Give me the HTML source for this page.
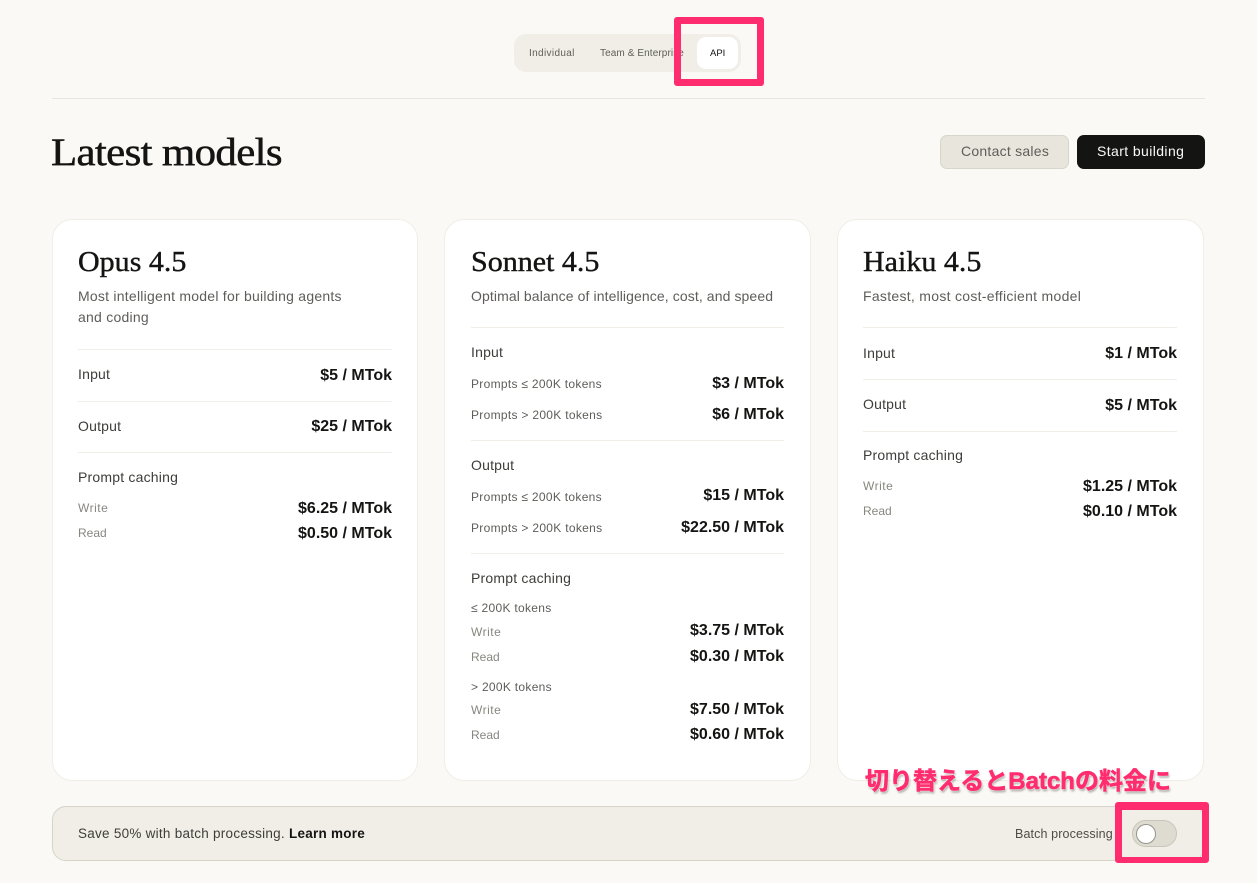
<!DOCTYPE html>
<html lang="en">
<head>
<meta charset="utf-8">
<title>Latest models</title>
<style>
html,body{margin:0;padding:0;background:#faf9f5;}
body{width:1257px;height:883px;position:relative;overflow:hidden;font-family:"Liberation Sans","Noto Sans CJK JP",sans-serif;color:#141413;}
.t{position:absolute;white-space:nowrap;line-height:20px;height:20px;}
.r{text-align:right;}
.box{position:absolute;box-sizing:border-box;}
.card{position:absolute;box-sizing:border-box;top:219px;height:562px;background:#fff;border:1px solid #f0eee6;border-radius:20px;}
.ln{position:absolute;height:1px;background:#f0eee6;}
.name{font-family:"Liberation Serif",serif;font-size:29px;font-weight:400;color:#141413;-webkit-text-stroke:.4px #141413;transform:scaleX(1.035);transform-origin:left center;}
.desc{font-size:14px;color:#5e5d59;}
.h{font-size:14px;color:#3d3d3a;letter-spacing:.2px;}
.s{font-size:12px;color:#5e5d59;letter-spacing:.3px;}
.g{font-size:12px;color:#87867f;}
.w{letter-spacing:.5px;}
.p{font-size:16px;font-weight:700;color:#141413;letter-spacing:0;margin-top:1px;}
.tab{font-size:10px;color:#5e5d59;}
</style>
</head>
<body>
<div class="box" style="left:514px;top:34px;width:227px;height:38px;background:#f0eee6;border-radius:12px;"></div>
<div class="t tab" style="left:529px;top:44px;letter-spacing:.35px;">Individual</div>
<div class="t tab" style="left:600px;top:44px;letter-spacing:.1px;">Team &amp; Enterprise</div>
<div class="box" style="left:697px;top:37px;width:41px;height:32px;background:#fff;border-radius:9px;"></div>
<div class="t" style="left:710px;top:44px;font-size:9.5px;color:#141413;">API</div>
<div class="box" style="left:674px;top:17px;width:90px;height:69px;border:7px solid #ff2d6f;border-radius:3px;"></div>
<div class="ln" style="left:52px;top:98px;width:1153px;background:#e8e6dc;"></div>

<div class="t" style="left:51px;top:133px;height:40px;line-height:40px;font-family:'Liberation Serif',serif;font-size:39px;color:#141413;-webkit-text-stroke:.5px #141413;letter-spacing:-.6px;transform:scaleX(1.1);transform-origin:left center;">Latest models</div>
<div class="box" style="left:940px;top:135px;width:129px;height:34px;background:#e8e6dc;border:1px solid #d8d6cb;border-radius:7px;"></div>
<div class="t" style="left:961px;top:141px;font-size:14px;color:#5e5d59;letter-spacing:.25px;">Contact sales</div>
<div class="box" style="left:1077px;top:135px;width:128px;height:34px;background:#141413;border-radius:7px;"></div>
<div class="t" style="left:1097px;top:141px;font-size:14px;color:#faf9f5;letter-spacing:.4px;">Start building</div>

<div class="card" style="left:52px;width:366px;"></div>
<div class="t name" style="left:78px;top:252px;">Opus 4.5</div>
<div class="t desc" style="left:78px;top:286px;letter-spacing:.24px;">Most intelligent model for building agents</div>
<div class="t desc" style="left:78px;top:307px;letter-spacing:.24px;">and coding</div>
<div class="ln" style="left:78px;top:349px;width:314px;"></div>
<div class="t h" style="left:78px;top:364px;">Input</div>
<div class="t p r" style="right:865px;top:365px;">$5 / MTok</div>
<div class="ln" style="left:78px;top:401px;width:314px;"></div>
<div class="t h" style="left:78px;top:416px;">Output</div>
<div class="t p r" style="right:865px;top:416px;">$25 / MTok</div>
<div class="ln" style="left:78px;top:452px;width:314px;"></div>
<div class="t h" style="left:78px;top:467px;">Prompt caching</div>
<div class="t g w" style="left:78px;top:498px;">Write</div>
<div class="t p r" style="right:865px;top:498px;">$6.25 / MTok</div>
<div class="t g" style="left:78px;top:523px;">Read</div>
<div class="t p r" style="right:865px;top:523px;">$0.50 / MTok</div>

<div class="card" style="left:444px;width:367px;"></div>
<div class="t name" style="left:471px;top:252px;">Sonnet 4.5</div>
<div class="t desc" style="left:471px;top:286px;letter-spacing:.1px;">Optimal balance of intelligence, cost, and speed</div>
<div class="ln" style="left:471px;top:327px;width:313px;"></div>
<div class="t h" style="left:471px;top:342px;">Input</div>
<div class="t s" style="left:471px;top:374px;">Prompts ≤ 200K tokens</div>
<div class="t p r" style="right:473px;top:373px;">$3 / MTok</div>
<div class="t s" style="left:471px;top:405px;">Prompts &gt; 200K tokens</div>
<div class="t p r" style="right:473px;top:404px;">$6 / MTok</div>
<div class="ln" style="left:471px;top:440px;width:313px;"></div>
<div class="t h" style="left:471px;top:455px;">Output</div>
<div class="t s" style="left:471px;top:487px;">Prompts ≤ 200K tokens</div>
<div class="t p r" style="right:473px;top:485px;">$15 / MTok</div>
<div class="t s" style="left:471px;top:518px;">Prompts &gt; 200K tokens</div>
<div class="t p r" style="right:473px;top:517px;">$22.50 / MTok</div>
<div class="ln" style="left:471px;top:553px;width:313px;"></div>
<div class="t h" style="left:471px;top:568px;">Prompt caching</div>
<div class="t s" style="left:471px;top:598px;">≤ 200K tokens</div>
<div class="t g w" style="left:471px;top:622px;">Write</div>
<div class="t p r" style="right:473px;top:620px;">$3.75 / MTok</div>
<div class="t g" style="left:471px;top:647px;">Read</div>
<div class="t p r" style="right:473px;top:646px;">$0.30 / MTok</div>
<div class="t s" style="left:471px;top:677px;">&gt; 200K tokens</div>
<div class="t g w" style="left:471px;top:700px;">Write</div>
<div class="t p r" style="right:473px;top:699px;">$7.50 / MTok</div>
<div class="t g" style="left:471px;top:725px;">Read</div>
<div class="t p r" style="right:473px;top:724px;">$0.60 / MTok</div>

<div class="card" style="left:837px;width:367px;"></div>
<div class="t name" style="left:863px;top:252px;">Haiku 4.5</div>
<div class="t desc" style="left:863px;top:286px;letter-spacing:.29px;">Fastest, most cost-efficient model</div>
<div class="ln" style="left:863px;top:327px;width:314px;"></div>
<div class="t h" style="left:863px;top:343px;">Input</div>
<div class="t p r" style="right:80px;top:343px;">$1 / MTok</div>
<div class="ln" style="left:863px;top:379px;width:314px;"></div>
<div class="t h" style="left:863px;top:394px;">Output</div>
<div class="t p r" style="right:80px;top:395px;">$5 / MTok</div>
<div class="ln" style="left:863px;top:431px;width:314px;"></div>
<div class="t h" style="left:863px;top:445px;">Prompt caching</div>
<div class="t g w" style="left:863px;top:476px;">Write</div>
<div class="t p r" style="right:80px;top:476px;">$1.25 / MTok</div>
<div class="t g" style="left:863px;top:501px;">Read</div>
<div class="t p r" style="right:80px;top:501px;">$0.10 / MTok</div>

<div class="box" style="left:52px;top:806px;width:1153px;height:55px;background:#f0eee6;border:1px solid #d6d4c9;border-radius:14px;"></div>
<div class="t" style="left:78px;top:824px;font-size:13.5px;color:#3d3d3a;letter-spacing:.26px;">Save 50% with batch processing. <b style="color:#141413;">Learn more</b></div>
<div class="t" style="left:1015px;top:824px;font-size:12.5px;color:#4d4c48;letter-spacing:.12px;">Batch processing</div>
<div class="box" style="left:1132px;top:820px;width:45px;height:27px;background:#dedcd1;border:1px solid #c8c6ba;border-radius:14px;"></div>
<div class="box" style="left:1137px;top:825px;width:18px;height:18px;background:#fff;border-radius:50%;box-shadow:0 0 0 1px rgba(90,90,80,.55);"></div>
<div class="box" style="left:1115px;top:802px;width:94px;height:61px;border-style:solid;border-color:#ff2d6f;border-width:8px 7px 6px 7px;border-radius:3px;"></div>
<div class="t" style="left:865px;top:769px;height:26px;line-height:26px;font-size:24px;font-weight:700;color:#ff2d6f;-webkit-text-stroke:.6px #ff2d6f;text-shadow:0 0 2px #fff,0 0 2px #fff,1px 2px 2px rgba(0,0,0,.4);font-family:'Liberation Sans','Noto Sans CJK JP',sans-serif;">切り替えるとBatchの料金に</div>
</body>
</html>
